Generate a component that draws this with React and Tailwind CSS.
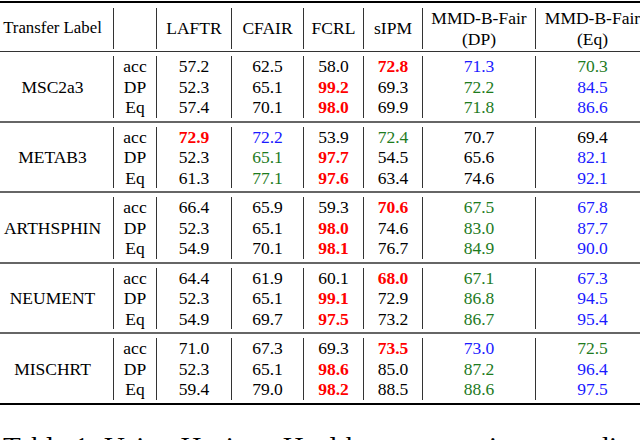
import React from 'react';

const cols = 'grid grid-cols-[113px_43px_75px_72px_60px_59px_113px_114px]';

const tones = {
  r: 'text-[#ff0000] font-bold',
  b: 'text-[#1a1aff]',
  g: 'text-[#1e7b1e]',
  k: 'text-black',
};

// each cell is "value" or "value:tone"
const groups = [
  {
    label: 'MSC2a3',
    rows: [
      ['57.2', '62.5', '58.0', '72.8:r', '71.3:b', '70.3:g'],
      ['52.3', '65.1', '99.2:r', '69.3', '72.2:g', '84.5:b'],
      ['57.4', '70.1', '98.0:r', '69.9', '71.8:g', '86.6:b'],
    ],
  },
  {
    label: 'METAB3',
    rows: [
      ['72.9:r', '72.2:b', '53.9', '72.4:g', '70.7', '69.4'],
      ['52.3', '65.1:g', '97.7:r', '54.5', '65.6', '82.1:b'],
      ['61.3', '77.1:g', '97.6:r', '63.4', '74.6', '92.1:b'],
    ],
  },
  {
    label: 'ARTHSPHIN',
    rows: [
      ['66.4', '65.9', '59.3', '70.6:r', '67.5:g', '67.8:b'],
      ['52.3', '65.1', '98.0:r', '74.6', '83.0:g', '87.7:b'],
      ['54.9', '70.1', '98.1:r', '76.7', '84.9:g', '90.0:b'],
    ],
  },
  {
    label: 'NEUMENT',
    rows: [
      ['64.4', '61.9', '60.1', '68.0:r', '67.1:g', '67.3:b'],
      ['52.3', '65.1', '99.1:r', '72.9', '86.8:g', '94.5:b'],
      ['54.9', '69.7', '97.5:r', '73.2', '86.7:g', '95.4:b'],
    ],
  },
  {
    label: 'MISCHRT',
    rows: [
      ['71.0', '67.3', '69.3', '73.5:r', '73.0:b', '72.5:g'],
      ['52.3', '65.1', '98.6:r', '85.0', '87.2:g', '96.4:b'],
      ['59.4', '79.0', '98.2:r', '88.5', '88.6:g', '97.5:b'],
    ],
  },
];

const metrics = ['acc', 'DP', 'Eq'];

function Cell({ raw }) {
  const [value, tone = 'k'] = raw.split(':');
  return <div className={tones[tone]}>{value}</div>;
}

function Group({ group, last }) {
  return (
    <>
      <div className="pt-[4px] pb-[3px]">
        <div className={cols}>
          <div className="flex items-center justify-center pr-2">{group.label}</div>
          <div className="border-l border-[#333] text-center">
            {metrics.map((m) => (
              <div key={m}>{m}</div>
            ))}
          </div>
          {[0, 1, 2, 3, 4, 5].map((c) => (
            <div key={c} className="border-l border-[#333] text-center">
              {group.rows.map((row, i) => (
                <Cell key={i} raw={row[c]} />
              ))}
            </div>
          ))}
        </div>
      </div>
      {last ? (
        <div className="h-[2px] bg-black" />
      ) : (
        <div className="h-[2px] bg-[#666]" />
      )}
    </>
  );
}

export default function App() {
  return (
    <div className="w-[640px] h-[440px] overflow-hidden bg-white">
      <div className="w-[649px] [font-family:'Liberation_Serif','Times_New_Roman',serif] text-[17.5px] leading-[20.5px] text-black">
        {/* top rule */}
        <div className="h-[2px] mt-[1px] bg-black" />

        {/* Header */}
        <div className="pt-[5px] pb-[3px]">
          <div className={`${cols} h-[40px]`}>
            <div className="flex items-center justify-center pr-2 text-[16.8px]">Transfer Label</div>
            <div className="border-l border-[#333]" />
            <div className="border-l border-[#333] flex items-center justify-center">LAFTR</div>
            <div className="border-l border-[#333] flex items-center justify-center">CFAIR</div>
            <div className="border-l border-[#333] flex items-center justify-center">FCRL</div>
            <div className="border-l border-[#333] flex items-center justify-center">sIPM</div>
            <div className="border-l border-[#333] flex flex-col items-center justify-center">
              <div>MMD-B-Fair</div>
              <div>(DP)</div>
            </div>
            <div className="border-l border-[#333] flex flex-col items-center justify-center">
              <div>MMD-B-Fair</div>
              <div>(Eq)</div>
            </div>
          </div>
        </div>
        <div className="h-px bg-[#333]" />

        {groups.map((g, i) => (
          <Group key={g.label} group={g} last={i === groups.length - 1} />
        ))}

        {/* Caption */}
        <p className="mt-[26px] pl-[3px] text-[29px] leading-[32px] whitespace-nowrap">
          Table 1: Using Horizon Health as source, in a new distribution setting
        </p>
      </div>
    </div>
  );
}
